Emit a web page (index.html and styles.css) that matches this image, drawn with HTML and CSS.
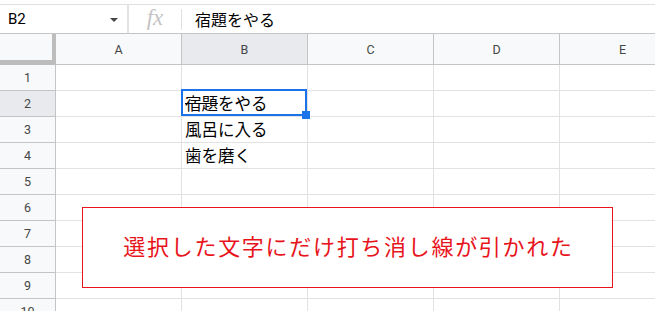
FILE: index.html
```html
<!DOCTYPE html>
<html lang="ja">
<head>
<meta charset="utf-8">
<title>Sheet</title>
<link rel="stylesheet" href="styles.css">
</head>
<body>
<div class="app">
  <div class="topstrip"></div>
  <div class="formula-bar">
    <div class="namebox">
      <span class="cellref">B2</span>
      <span class="caret"></span>
    </div>
    <div class="fx">fx</div>
    <div class="fx-sep"></div>
    <div class="formula-text">宿題をやる</div>
  </div>
  <div class="sheet">
    <div class="grid">
      <div class="corner"></div>
      <div class="colhead">A</div>
      <div class="colhead active">B</div>
      <div class="colhead">C</div>
      <div class="colhead">D</div>
      <div class="colhead">E</div>

      <div class="rowhead">1</div><div class="cell"></div><div class="cell"></div><div class="cell"></div><div class="cell"></div><div class="cell"></div>
      <div class="rowhead active">2</div><div class="cell"></div><div class="cell"><span class="strike">宿題</span>をやる</div><div class="cell"></div><div class="cell"></div><div class="cell"></div>
      <div class="rowhead">3</div><div class="cell"></div><div class="cell">風呂に入る</div><div class="cell"></div><div class="cell"></div><div class="cell"></div>
      <div class="rowhead">4</div><div class="cell"></div><div class="cell">歯を磨く</div><div class="cell"></div><div class="cell"></div><div class="cell"></div>
      <div class="rowhead">5</div><div class="cell"></div><div class="cell"></div><div class="cell"></div><div class="cell"></div><div class="cell"></div>
      <div class="rowhead">6</div><div class="cell"></div><div class="cell"></div><div class="cell"></div><div class="cell"></div><div class="cell"></div>
      <div class="rowhead">7</div><div class="cell"></div><div class="cell"></div><div class="cell"></div><div class="cell"></div><div class="cell"></div>
      <div class="rowhead">8</div><div class="cell"></div><div class="cell"></div><div class="cell"></div><div class="cell"></div><div class="cell"></div>
      <div class="rowhead">9</div><div class="cell"></div><div class="cell"></div><div class="cell"></div><div class="cell"></div><div class="cell"></div>
      <div class="rowhead">10</div><div class="cell"></div><div class="cell"></div><div class="cell"></div><div class="cell"></div><div class="cell"></div>
    </div>
    <div class="selection"><span class="handle"></span></div>
    <div class="callout">選択した文字にだけ打ち消し線が引かれた</div>
  </div>
</div>
</body>
</html>
```

FILE: styles.css
```css
html, body {
  margin: 0;
  padding: 0;
  background: #ffffff;
}
body {
  width: 655px;
  height: 311px;
  overflow: hidden;
  font-family: Roboto, "Noto Sans CJK JP", sans-serif;
}
.app {
  width: 655px;
}
.topstrip {
  height: 4px;
  border-bottom: 1px solid #e0e0e0;
}
.formula-bar {
  display: flex;
  align-items: center;
  height: 28px;
  border-bottom: 1px solid #c4c4c4;
}
.namebox {
  box-sizing: border-box;
  width: 129px;
  height: 28px;
  display: flex;
  align-items: center;
  padding-left: 8px;
  padding-right: 9px;
  border-right: 2px solid #e3e3e3;
}
.cellref {
  flex: 1;
  font-family: Roboto, sans-serif;
  font-size: 15px;
  color: #000;
  line-height: 28px;
}
.caret {
  width: 0;
  height: 0;
  border-left: 4px solid transparent;
  border-right: 4px solid transparent;
  border-top: 4px solid #444746;
  margin-top: 1px;
}
.fx {
  width: 52px;
  text-align: center;
  font-family: "Liberation Serif", serif;
  font-style: italic;
  font-size: 23px;
  color: #c4c4c4;
  line-height: 28px;
  margin-top: -2px;
}
.fx-sep {
  width: 1px;
  height: 21px;
  background: #e0e0e0;
}
.formula-text {
  padding-left: 13px;
  font-family: "Noto Sans CJK JP", sans-serif;
  font-size: 16px;
  color: #000;
  line-height: 28px;
}
.sheet {
  position: relative;
}
.grid {
  display: grid;
  grid-template-columns: 56px repeat(5, 126px);
  grid-template-rows: 31px repeat(10, 26px);
}
.grid > div {
  box-sizing: border-box;
}
.corner {
  background: #f8f9fa;
  border-right: 4px solid #bdbdbd;
  border-bottom: 5px solid #bdbdbd;
}
.colhead {
  background: #f8f9fa;
  border-right: 1px solid #c4c4c4;
  border-bottom: 1px solid #c4c4c4;
  display: flex;
  align-items: center;
  justify-content: center;
  font-size: 12.5px;
  color: #444746;
  padding-top: 1px;
}
.colhead.active,
.rowhead.active {
  background: #e8eaed;
}
.rowhead {
  background: #f8f9fa;
  border-right: 1px solid #c4c4c4;
  border-bottom: 1px solid #c4c4c4;
  display: flex;
  align-items: center;
  justify-content: center;
  font-size: 12.5px;
  color: #444746;
}
.cell {
  border-right: 1px solid #e2e2e2;
  border-bottom: 1px solid #e2e2e2;
  padding-left: 3px;
  font-family: "Noto Sans CJK JP", sans-serif;
  font-size: 16.5px;
  line-height: 25px;
  color: #000;
  white-space: nowrap;
}
.strike {
  text-decoration: line-through;
  text-decoration-thickness: 1px;
}
.selection {
  position: absolute;
  left: 181px;
  top: 55px;
  width: 126px;
  height: 27px;
  box-sizing: border-box;
  border: 2px solid #1a73e8;
}
.handle {
  position: absolute;
  right: -5px;
  bottom: -5px;
  width: 8px;
  height: 8px;
  background: #1a73e8;
}
.callout {
  position: absolute;
  left: 82px;
  top: 173px;
  width: 531px;
  height: 81px;
  box-sizing: border-box;
  border: 1px solid #e8141c;
  background: #ffffff;
  display: flex;
  align-items: center;
  justify-content: center;
  padding-bottom: 6px;
  padding-left: 2px;
  font-family: "Noto Sans CJK JP", sans-serif;
  font-size: 22px;
  letter-spacing: 1.7px;
  color: #e8141c;
}
```
